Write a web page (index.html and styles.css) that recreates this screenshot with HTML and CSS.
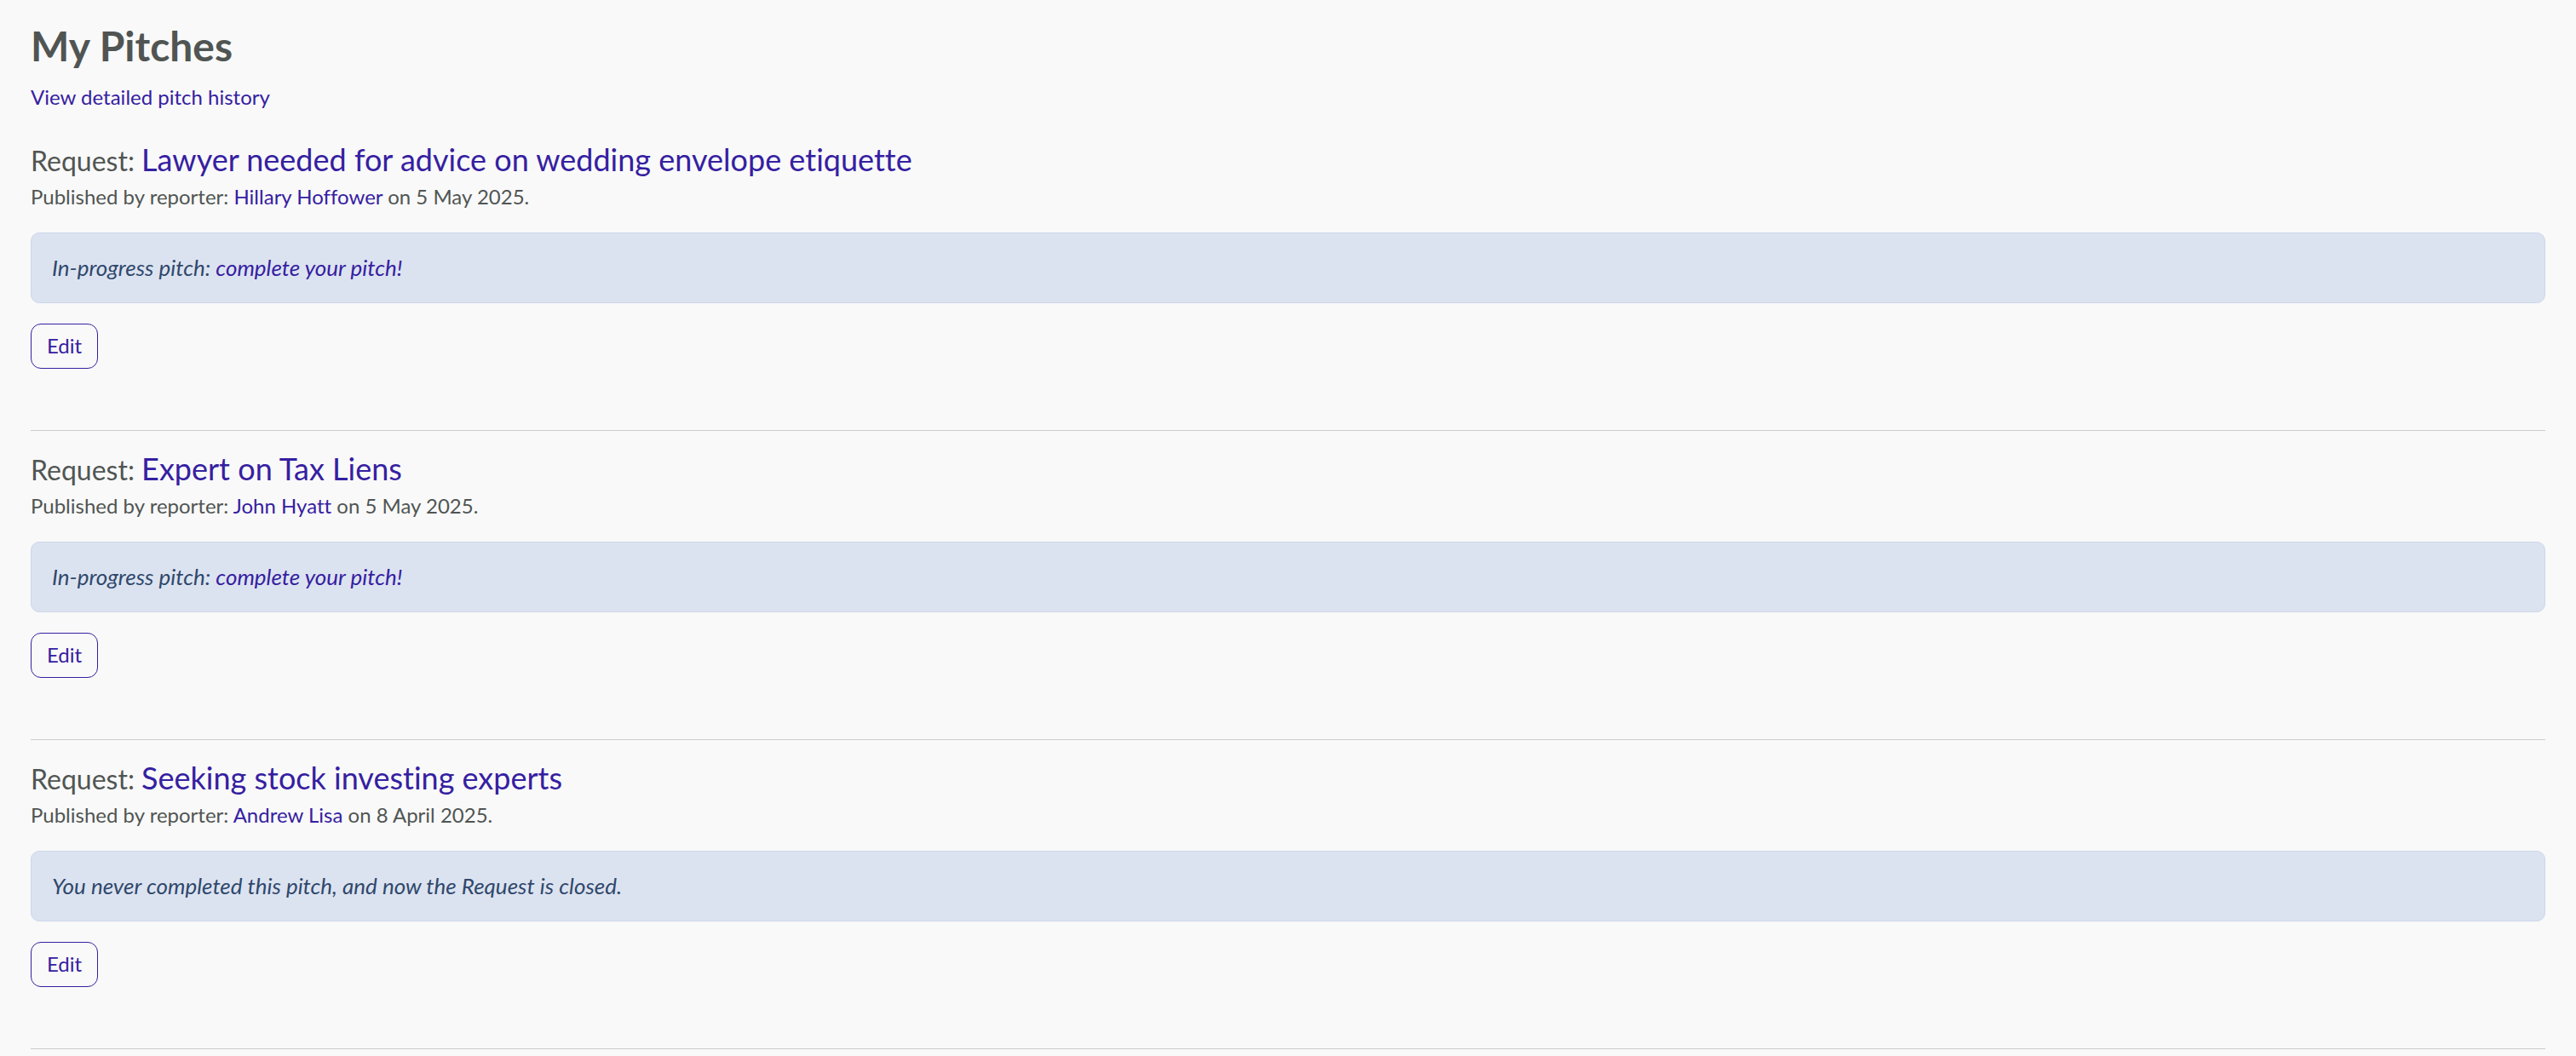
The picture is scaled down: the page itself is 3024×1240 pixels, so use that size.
FILE: index.html
```html
<!DOCTYPE html>
<html lang="en">
<head>
<meta charset="utf-8">
<title>My Pitches</title>
<link rel="stylesheet" href="styles.css">
</head>
<body>
<main class="page">
  <h1 class="page-title">My Pitches</h1>
  <p class="history"><a href="#">View detailed pitch history</a></p>
  <article class="pitch">
    <h2 class="request">Request: <a href="#">Lawyer needed for advice on wedding envelope etiquette</a></h2>
    <p class="byline">Published by reporter: <a href="#">Hillary Hoffower</a> on 5 May 2025.</p>
    <p class="notice">In-progress pitch: <a href="#">complete your pitch!</a></p>
    <button class="edit" type="button">Edit</button>
  </article>
  <article class="pitch">
    <h2 class="request">Request: <a href="#">Expert on Tax Liens</a></h2>
    <p class="byline">Published by reporter: <a href="#">John Hyatt</a> on 5 May 2025.</p>
    <p class="notice">In-progress pitch: <a href="#">complete your pitch!</a></p>
    <button class="edit" type="button">Edit</button>
  </article>
  <article class="pitch">
    <h2 class="request">Request: <a href="#">Seeking stock investing experts</a></h2>
    <p class="byline">Published by reporter: <a href="#">Andrew Lisa</a> on 8 April 2025.</p>
    <p class="notice">You never completed this pitch, and now the Request is closed.</p>
    <button class="edit" type="button">Edit</button>
  </article>
</main>
</body>
</html>
```
FILE: styles.css
```css
* { box-sizing: border-box; }
body { margin: 0; background: #f9f9f9; color: #505553; font: 24px/36px Lato, sans-serif; font-variant-ligatures: none; }
a { color: #3520a1; text-decoration: none; }
h1, h2, p { margin: 0; }
.page { padding: 24px 36px 0; }
.page-title { font-size: 48px; line-height: 60px; font-weight: 700; }
.history { margin: 12px 0 33px; }
.pitch { padding-bottom: 72px; margin-bottom: 22px; border-bottom: 1px solid #cccccc; }
.pitch:last-child { margin-bottom: 0; }
.request { font-size: 32px; line-height: 48px; font-weight: 400; }
.request a { font-size: 36px; line-height: 36px; }
.notice { margin: 24px 0; padding: 24px; border: 1px solid #cbd7e9; border-radius: 10px; background: #dce3f0; color: #2f486c; font-size: 26px; line-height: 33px; font-style: italic; }
.edit { display: block; height: 53px; padding: 0 18px 2px; border: 1px solid #3520a1; border-radius: 12px; background: transparent; color: #3520a1; font: inherit; }
```
